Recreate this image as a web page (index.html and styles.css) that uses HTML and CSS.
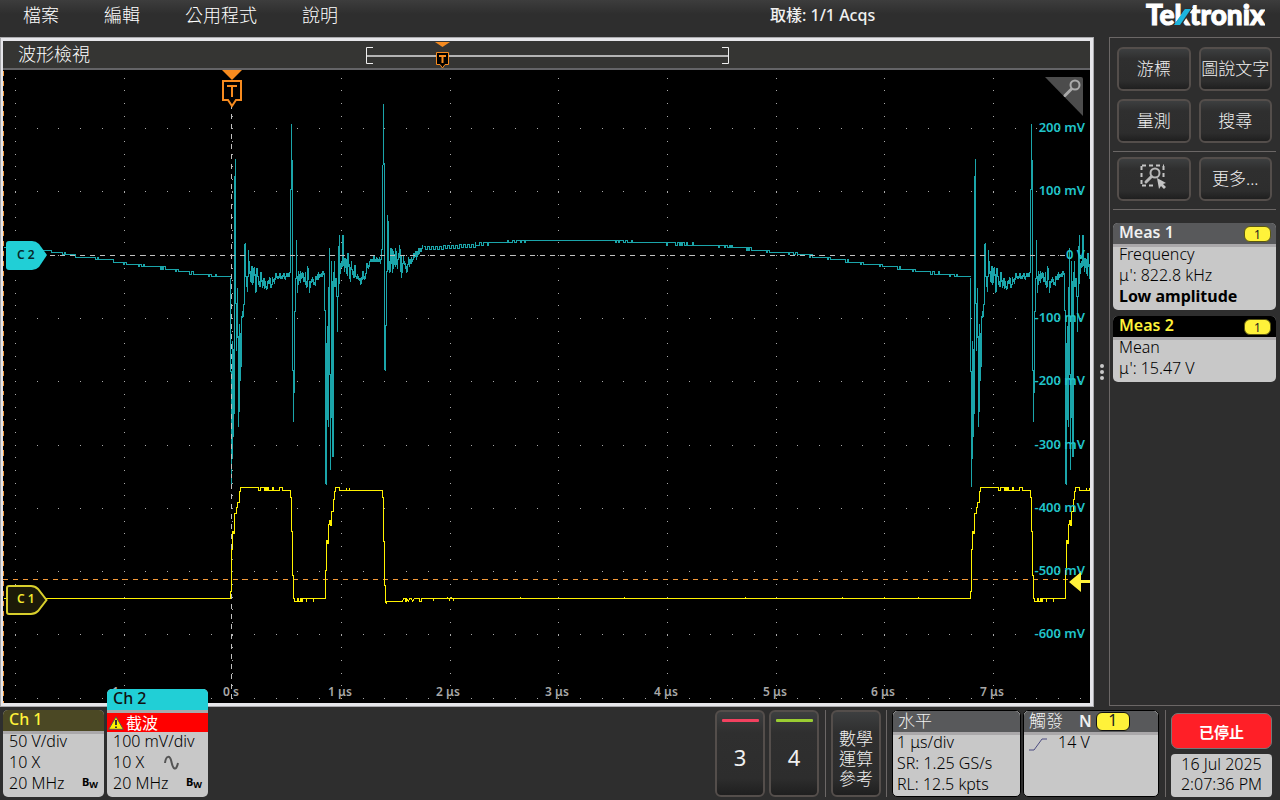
FILE: index.html
```html
<!DOCTYPE html>
<html lang="zh-Hant">
<head>
<meta charset="UTF-8">
<title>Tektronix</title>
<link rel="stylesheet" href="styles.css">
</head>

<body>

<header class="topbar">
<nav class="menu">
<button>檔案</button>
<button>編輯</button>
<button>公用程式</button>
<button>說明</button>
</nav>
<div class="acqs">取樣: 1/1 Acqs</div>
<svg class="logo" width="120" height="32" viewBox="0 0 120 32" role="img" aria-label="Tektronix">
<text x="1" y="25">Tektronix</text>
<path class="logo-gap" d="M28 26L39 12L41 8H48L36 26Z"/>
<path class="logo-slash" d="M29 25L40 9H46L35 25Z"/>
</svg>
</header>

<main class="main">

<section class="scope">
<div class="scope-title">
<h1>波形檢視</h1>
<svg class="overview" width="364" height="27" viewBox="0 0 364 27">
<path class="ov-line" d="M1 15H362"/>
<path class="ov-bracket" d="M7 6.500H.5V22.500H7M356 6.500H362.500V22.500H356"/>
<path class="orange" d="M69 1H84L76.500 6Z"/>
<path class="tbox" d="M70.500 11.500H82.500V23.500H79L76.500 27L74 23.500H70.500Z"/>
<path class="tmark" d="M73 15H80M76.500 15V22"/>
</svg>
</div>

<svg class="plot" viewBox="3 70 1087 633" preserveAspectRatio="none">
<g transform="translate(.5 .5)" shape-rendering="crispEdges">
<path id="dots" class="dots"/>
<path id="ch2wave" class="wave cyan"/>
<path class="dash" d="M9 255H1066M231 103V701"/>
<path class="dash trig" d="M2 579H1068M3 70V703"/>
<path id="ch1wave" class="wave yellow"/>
</g>

<path class="corner" d="M1045 77H1081Q1083 77 1083 79V116Z"/>
<circle class="lens" cx="1075" cy="85" r="4.500"/>
<path class="lens handle" d="M1071.500 89L1065 95.500"/>

<g id="ylabels" class="ylabels"></g>
<g id="xlabels" class="xlabels"></g>

<path class="orange" d="M222 70H242L232 80Z"/>
<path class="tbox big" d="M223 81H241V100H236L232 106L228 100H223Z"/>
<path class="tmark big" d="M227 86H237M232 86V97"/>

<path class="tag2" d="M9 241H32Q36 241 39 244L47 255L39 267Q36 270 32 270H9Q6 270 6 267V244Q6 241 9 241Z"/>
<text class="tagtext" x="17" y="259">C 2</text>
<path class="tag1" d="M9 586H31Q35 586 38 589L46.500 600L38 611Q35 614 31 614H9Q7 614 7 612V588Q7 586 9 586Z"/>
<text class="tagtext y" x="17" y="603">C 1</text>
<path class="level" d="M1069 582L1081 572V580H1090V583H1081V592Z"/>
</svg>
</section>

<div class="grip"><i></i><i></i><i></i></div>

<aside class="side">
<div class="btns">
<button class="key">游標</button>
<button class="key">圖說文字</button>
<button class="key">量測</button>
<button class="key">搜尋</button>
</div>
<div class="btns">
<button class="key" aria-label="zoom">
<svg width="28" height="26" viewBox="0 0 28 26">
<path class="sel" d="M2 1.500H24M1.500 2V22M23.500 2V14M2 21.500H16"/>
<circle class="mag" cx="15" cy="9" r="4.500"/>
<path class="mag thick" d="M11.500 12.500L6 18"/>
<path class="arrow" d="M17 14L26 19L23 20L26 23L24 25L21 22L19 25Z"/>
</svg>
</button>
<button class="key">更多...</button>
</div>

<article class="card meas">
<header><h2>Meas 1</h2><span class="pill">1</span></header>
<p>Frequency</p>
<p>μ': 822.8 kHz</p>
<p><b>Low amplitude</b></p>
</article>

<article class="card meas active">
<header><h2>Meas 2</h2><span class="pill">1</span></header>
<p>Mean</p>
<p>μ': 15.47 V</p>
</article>
</aside>

</main>

<footer class="bottom">
<article class="card ch ch1">
<header><h2>Ch 1</h2></header>
<p>50 V/div</p>
<p>10 X</p>
<p>20 MHz <span class="bw">B<sub>W</sub></span></p>
</article>

<article class="card ch ch2">
<header><h2>Ch 2</h2></header>
<div class="clip">
<svg width="16" height="14" viewBox="0 0 16 14"><path class="warn" d="M8 .8L15.300 13.300H.7Z"/><path class="bang" d="M8 4V9M8 10.500V12"/></svg>
截波
</div>
<p>100 mV/div</p>
<p>10 X <svg class="sine" width="16" height="16" viewBox="0 0 16 16"><path d="M1 8C2 0 6 0 7.500 7S12 17 14 8"/></svg></p>
<p>20 MHz <span class="bw">B<sub>W</sub></span></p>
</article>

<div class="right">
<button class="key chan red">3</button>
<button class="key chan green">4</button>
<span class="sep"></span>
<button class="key math">數學<br>運算<br>參考</button>
<span class="sep"></span>

<article class="card box horiz">
<header><h2>水平</h2></header>
<p>1 μs/div</p>
<p>SR: 1.25 GS/s</p>
<p>RL: 12.5 kpts</p>
</article>

<article class="card box trigger">
<header><h2>觸發</h2><b>N</b><span class="pill">1</span></header>
<p><svg width="20" height="14" viewBox="0 0 20 14"><path class="edge" d="M1 13H6L14 2H19"/></svg>14 V</p>
</article>
<span class="sep"></span>

<div class="status">
<button class="stop">已停止</button>
<div class="date">16 Jul 2025<br>2:07:36 PM</div>
</div>
</div>
</footer>

<script src="scope.js"></script>
</body>
</html>
```
FILE: styles.css
```css
*{
box-sizing:border-box;
}

body{
margin:0;
height:100vh;
display:flex;
flex-direction:column;
overflow:hidden;
background:#2e2e2e;
color:#f0f0f0;
font-family:"Noto Sans","Noto Sans CJK TC",sans-serif;
font-size:16px;
}

h1,h2,p{
margin:0;
font-weight:inherit;
}

button{
font-family:inherit;
color:inherit;
cursor:pointer;
}

svg{
fill:none;
}

/* top bar */

.topbar{
flex:0 0 37px;
display:flex;
background:linear-gradient(#3d3d3d,#2e2e2e 14px);
}

.menu{
flex:0 0 60%;
display:flex;
align-items:flex-start;
gap:45px;
padding-left:23px;
}

.menu button{
padding:0;
border:0;
background:none;
color:#fff;
font-size:18px;
font-weight:300;
line-height:30px;
}

.acqs{
padding-left:2px;
font-size:16px;
font-weight:500;
line-height:30px;
}

.logo{
margin-left:auto;
margin-right:15px;
}

.logo text{
fill:#fff;
stroke:#fff;
font-family:Lato,sans-serif;
font-size:28px;
font-weight:900;
}

.logo-gap{
fill:#2e2e2e;
}

.logo-slash{
fill:#1cb5dd;
}

/* waveform view */

.main{
flex:1;
min-height:0;
display:flex;
}

.scope{
flex:1;
min-width:0;
display:flex;
flex-direction:column;
margin:1px;
border:3px solid #e6e6ea;
border-left-width:2px;
box-shadow:0 0 0 1px #aaaaad;
background:#000;
}

.scope-title{
flex:0 0 29px;
display:flex;
background:#353533;
border-bottom:2px solid #646467;
}

.scope-title h1{
flex:0 0 363px;
padding-left:15px;
color:#fff;
font-size:18px;
font-weight:300;
line-height:27px;
}

.overview{
overflow:visible;
}

.ov-line{
stroke:#b4b4b4;
stroke-width:2;
}

.ov-bracket{
stroke:#eee;
}

.orange{
fill:#f78b1f;
}

.tbox{
fill:#000;
stroke:#f78b1f;
}

.tmark{
stroke:#f78b1f;
stroke-width:2;
}

.big{
stroke-width:2;
}

.plot{
flex:1;
min-height:0;
width:100%;
}

.dots{
stroke:#aaa;
}

.wave{
stroke-width:1;
}

.cyan{
stroke:#1ba5aa;
}

.yellow{
stroke:#fff200;
}

.dash{
stroke:#c0c0c0;
stroke-dasharray:5 5;
}

.trig{
stroke:#f2993b;
}

.ylabels,.xlabels{
font-size:13px;
font-weight:600;
}

.ylabels{
fill:#20c4ca;
text-anchor:end;
}

.xlabels{
fill:#a8a8a8;
font-size:12px;
text-anchor:middle;
}

.corner{
fill:#4c4c4c;
}

.lens{
stroke:#aaa;
stroke-width:2;
}

.handle{
stroke-width:3;
stroke-linecap:round;
}

.tag2{
fill:#21cfd6;
}

.tag1{
fill:#1c1a08;
stroke:#d8cf2c;
stroke-width:2;
}

.tagtext{
fill:#06292b;
font-size:12px;
font-weight:600;
}

.tagtext.y{
fill:#f3e92f;
}

.level{
fill:#fff23a;
}

.grip{
flex:0 0 15px;
display:flex;
flex-direction:column;
align-items:center;
justify-content:center;
gap:2px;
}

.grip i{
width:4px;
height:4px;
border-radius:2px;
background:#c8c8c8;
}

/* side panel */

.side{
flex:0 0 171px;
margin-bottom:1px;
padding:0 4px 0 3px;
border:1px solid #6b6766;
border-right:0;
}

.btns{
display:grid;
grid-template-columns:1fr 1fr;
gap:8px;
padding:9px 4px 8px;
border-bottom:1px solid #6b6766;
}

.btns + .btns{
padding-top:5px;
margin-bottom:13px;
}

.key{
height:44px;
padding:0 0 4px;
border:2px solid #544e4b;
border-radius:6px;
background:linear-gradient(#3d3f40,#2f2f2f 25%,#2d2d2d 80%,#1f1f1f);
font-size:17px;
font-weight:300;
white-space:nowrap;
}

.key svg{
vertical-align:middle;
}

.sel{
stroke:#c4c4c4;
stroke-width:2;
stroke-dasharray:4 3;
}

.mag{
stroke:#b8b8b8;
stroke-width:2;
}

.thick{
stroke-width:3;
stroke-linecap:round;
}

.arrow{
fill:#c4c4c4;
}

/* cards */

.card{
padding-bottom:3px;
border-radius:5px;
background:#c8c8c8;
color:#000;
font-size:16px;
font-weight:350;
line-height:21px;
}

.card header{
display:flex;
height:24px;
border-bottom:3px solid #aaa8aa;
border-radius:5px 5px 0 0;
background:#58595b;
color:#f0f0f0;
}

.card header + p{
margin-top:-3px;
}

.card h2{
font-size:16px;
line-height:18px;
}

.pill{
border:1px solid #5c5810;
border-radius:6px;
background:#fff23a;
color:#222;
font-weight:400;
text-align:center;
}

.meas{
margin-bottom:6px;
}

.meas header{
padding:0 5px 0 6px;
justify-content:space-between;
align-items:flex-start;
}

.meas h2{
font-weight:600;
}

.meas p{
padding-left:6px;
}

.meas .pill{
width:27px;
height:16px;
margin-top:3px;
font-size:12px;
line-height:15px;
}

.meas b{
font-weight:700;
}

.active header{
background:#000;
color:#fff23a;
}

/* bottom bar */

.bottom{
flex:0 0 93px;
min-height:0;
display:flex;
align-items:flex-end;
gap:3px;
padding:0 8px 3px 3px;
}

.ch{
position:relative;
width:101px;
}

.ch header{
padding-left:6px;
}

.ch h2{
font-weight:500;
}

.ch p{
display:flex;
align-items:center;
padding-left:6px;
}

.ch1 header{
background:#4b4824;
color:#fff23a;
}

.ch2 header{
background:#21cfd6;
color:#111;
}

.clip{
display:flex;
align-items:center;
gap:2px;
height:19px;
margin-bottom:-1px;
padding-left:1px;
background:#f00;
color:#fff;
font-weight:400;
line-height:16px;
}

.warn{
fill:#fff200;
stroke:#555;
}

.bang{
stroke:#333;
stroke-width:2;
}

.sine{
margin-left:20px;
}

.sine path{
stroke:#555;
stroke-width:2;
}

.bw{
display:flex;
align-self:flex-start;
margin-left:auto;
margin-right:6px;
font-size:11px;
font-weight:700;
line-height:17px;
}

.bw sub{
padding-top:3px;
font-size:9px;
line-height:17px;
vertical-align:baseline;
}

.right{
display:flex;
align-items:stretch;
height:87px;
margin-left:auto;
}

.right .key{
width:50px;
height:auto;
}

.right .chan{
display:flex;
flex-direction:column;
align-items:center;
gap:20px;
margin-right:4px;
padding-top:7px;
font-size:22px;
font-weight:400;
}

.chan::before{
content:"";
width:37px;
height:3px;
border-radius:1px;
background:#f2415f;
}

.green::before{
background:#9acd32;
}

.right .math{
padding:10px 0 0;
line-height:20px;
}

.sep{
width:1px;
margin:0 5px;
background:#6b6766;
}

.chan + .sep{
margin-left:2px;
}

.trigger + .sep{
margin-left:6px;
}

.box{
border:1px solid #000;
}

.box header{
height:24px;
padding-left:5px;
}

.box h2{
font-size:17px;
font-weight:300;
line-height:20px;
}

.box p{
padding-left:4px;
}

.horiz{
width:129px;
margin-right:2px;
}

.trigger{
width:136px;
}

.trigger b{
margin-left:16px;
font-weight:600;
line-height:20px;
}

.trigger .pill{
width:34px;
height:19px;
margin:1px 0 0 4px;
border-color:#111;
line-height:15px;
}

.trigger svg{
margin-right:10px;
vertical-align:-3px;
}

.edge{
stroke:#4b4b80;
}

.status{
display:flex;
flex-direction:column;
gap:5px;
padding-top:3px;
width:101px;
}

.stop{
height:36px;
padding:0;
border:1px solid #777;
border-radius:7px;
background:#ff1f27;
color:#fff;
font-size:15px;
font-weight:700;
}

.date{
flex:1;
border-radius:4px;
background:#c8c8c8;
color:#000;
font-size:16px;
font-weight:350;
line-height:20px;
text-align:center;
white-space:nowrap;
}
```
FILE: scope.js
```js
const NS="http://www.w3.org/2000/svg"
const PERIOD=740

// graticule
let dots=""
for(let c=0;c<10;c++){
let x=Math.round(14+c*108.67)
for(let r=0;r<50;r++){
dots+=`M${x} ${Math.round(77.6+r*12.66)}h1`
}
}
for(let r=0;r<10;r++){
let y=Math.round(128+r*63.3)
for(let c=0;c<50;c++){
dots+=`M${Math.round(14+c*21.73)} ${y}h1`
}
}
document.getElementById("dots").setAttribute("d",dots)

function label(id,x,y,text){
let t=document.createElementNS(NS,"text")
t.setAttribute("x",x)
t.setAttribute("y",y)
t.textContent=text
document.getElementById(id).appendChild(t)
}

for(let i=0;i<9;i++){
let mv=200-i*100
label("ylabels",1085,Math.round(132+i*63.3),mv===0?"0 V":mv+" mV")
}
for(let i=-1;i<8;i++){
label("xlabels",Math.round(231+i*108.7),696,i===0?"0 s":i+" μs")
}

// slow part of channel 2, stepped like the digitizer output
function slow(points){
let d=""
for(let i=0;i<points.length-1;i++){
let [x1,y1]=points[i]
let [x2,y2]=points[i+1]
for(let x=x1;x<x2;x++){
let y=y1+(y2-y1)*(x-x1)/(x2-x1)
y+=Math.sin(x*1.7)*Math.sin(x*.37)*.8
y=Math.round(Math.round(y/2.4)*2.4)
d+=(d?"L":"M")+x+" "+y+"h1"
}
}
return d
}

// ringing: one [x, top, bottom] column per pixel
const ring=[
[230,277,370],[231,370,485],[232,340,457],[233,348,435],[234,175,412],[235,158,302],
[236,302,349],[237,287,336],[238,335,425],[239,323,410],[240,332,379],[241,315,365],
[242,310,316],[243,303,315],[244,243,303],[245,242,275],[246,275,285],[247,275,290],
[248,249,275],[249,260,272],[250,270,280],[251,265,281],[252,265,283],[253,267,281],
[254,266,274],[255,273,291],[256,267,290],[257,267,275],[258,275,283],[259,280,285],
[260,271,285],[261,271,280],[262,279,286],[263,277,284],[264,277,287],[265,280,286],
[266,285,288],[267,280,287],[268,279,282],[269,276,282],[270,277,286],[271,283,286],
[272,276,283],[273,278,280],[274,277,282],[275,272,278],[276,272,276],[277,275,277],
[278,275,277],[279,272,276],[280,272,277],[281,275,277],[282,274,277],[283,272,275],
[284,272,277],[285,275,278],[286,272,275],[287,272,275],[288,272,275],[289,271,275],
[290,188,271],[291,123,188],[292,159,369],[293,369,420],[294,310,391],[295,277,310],
[296,239,277],[297,275,291],[298,270,283],[299,273,279],[300,270,281],[301,272,277],
[302,271,276],[303,272,280],[304,276,280],[305,271,283],[306,280,286],[307,265,285],
[308,267,278],[309,280,291],[310,280,286],[311,278,281],[312,276,280],[313,278,283],
[314,281,283],[315,275,284],[316,275,278],[317,273,278],[318,271,278],[319,273,276],
[320,273,275],[321,272,275],[322,270,275],[323,270,273],[324,272,309],[325,309,482],
[326,342,483],[327,325,418],[328,286,425],[329,247,373],[330,373,468],[331,260,416],
[332,280,455],[333,271,455],[334,260,285],[335,277,285],[336,277,295],[337,295,330],
[338,245,295],[339,234,282],[340,262,272],[341,260,266],[342,234,265],[343,234,264],
[344,257,270],[345,257,266],[346,258,272],[347,252,274],[348,252,265],[349,263,277],
[350,266,280],[351,260,268],[352,268,273],[353,270,276],[354,264,276],[355,264,275],
[356,275,277],[357,273,277],[358,275,278],[359,277,279],[360,277,283],[361,276,282],
[362,270,278],[363,270,277],[364,275,278],[365,272,277],[366,262,272],[367,262,266],
[368,264,267],[369,260,265],[370,258,260],[371,258,260],[372,258,260],[373,255,260],
[374,255,260],[375,258,260],[376,256,260],[377,257,260],[378,258,260],[379,256,260],
[380,258,262],[381,248,258],[382,164,248],[383,103,163],[384,162,368],[385,324,369],
[386,270,324],[387,214,270],[388,220,268],[389,260,271],[390,247,270],[391,247,262],
[392,248,271],[393,250,267],[394,253,263],[395,247,265],[396,250,263],[397,258,267],
[398,252,258],[399,244,256],[400,248,270],[401,255,276],[402,262,271],[403,254,262],
[404,260,263],[405,262,267],[406,265,271],[407,263,270],[408,256,263],[409,258,265],
[410,258,262],[411,256,262],[412,258,260],[413,252,258],[414,252,256],[415,250,255],
[416,250,258],[417,250,255],[418,247,253],[419,247,252],[420,247,250],[421,247,250],
[422,244,247]
]

function columns(data,shift){
return data.filter(c=>c[0]+shift<1090).map(c=>`M${c[0]+shift} ${c[1]}V${c[2]+1}`).join("")
}

let ch2=slow([[3,247],[47,250],[60,253],[78,256],[104,259],[131,264],[158,267],[195,273],[230,277]])
ch2+=columns(ring,0)

// small ripple after the last edge
ch2+="M423 246"
for(let x=423;x<474;x+=4){
let y=x<440?246:x<458?245:244
ch2+=`L${x} ${y}h2v3h2V${y}`
}
ch2+=slow([[474,244],[500,242],[535,240],[600,240],[640,242],[690,244],[730,246],[760,250],[800,254],[850,261],[900,268],[945,274],[970,277]])
ch2+=columns(ring,PERIOD)
document.getElementById("ch2wave").setAttribute("d",ch2)

// channel 1 pulses
const pulses=[
[230,598],[230,591],[231,591],[231,549],[232,549],[232,531],[233,531],[233,533],[234,533],
[234,513],[236,513],[236,507],[237,507],[237,502],[239,502],[239,491],[240,491],[240,487],
[258,487],[258,490],[260,490],[260,487],[264,487],[264,490],[265,490],[265,487],[266,487],
[266,490],[267,490],[267,487],[268,487],[268,490],[272,490],[272,487],[273,487],[273,490],
[279,490],[279,487],[282,487],[282,490],[290,490],[290,497],[291,497],[291,531],[292,531],
[292,575],[293,575],[293,598],[294,598],[294,601],[297,601],[297,598],[298,598],[298,601],
[300,601],[300,598],[301,598],[301,601],[302,601],[302,598],[306,598],[306,601],[306,598],
[313,598],[313,601],[313,598],[325,598],[325,570],[326,570],[326,540],[327,540],[327,543],
[328,543],[328,524],[329,524],[329,520],[330,520],[330,525],[331,525],[331,511],[333,511],
[333,499],[334,499],[334,491],[335,491],[335,487],[339,487],[339,490],[346,490],[346,487],
[346,490],[349,490],[349,487],[349,490],[382,490],[382,497],[383,497],[383,541],[384,541],
[384,585],[385,585],[385,601],[386,603],[386,601],[402,601],[403,598],[405,598],[405,601],
[406,601],[406,598],[408,601],[409,598],[411,598],[412,601],[414,598],[419,598],[419,601],
[421,601],[421,598],[425,598]
]

function steps(shift){
return pulses.filter(p=>p[0]+shift<1090).map(p=>"L"+(p[0]+shift)+" "+p[1]).join("")
}

let ch1="M3 598"+steps(0)
for(let x of [433,447,449,451,453,520,624,745,842,884,918]){
ch1+=`H${x}V${x<500&&x%4===1?600:596}V598`
}
ch1+=steps(PERIOD)+"H1090"
document.getElementById("ch1wave").setAttribute("d",ch1)
```
